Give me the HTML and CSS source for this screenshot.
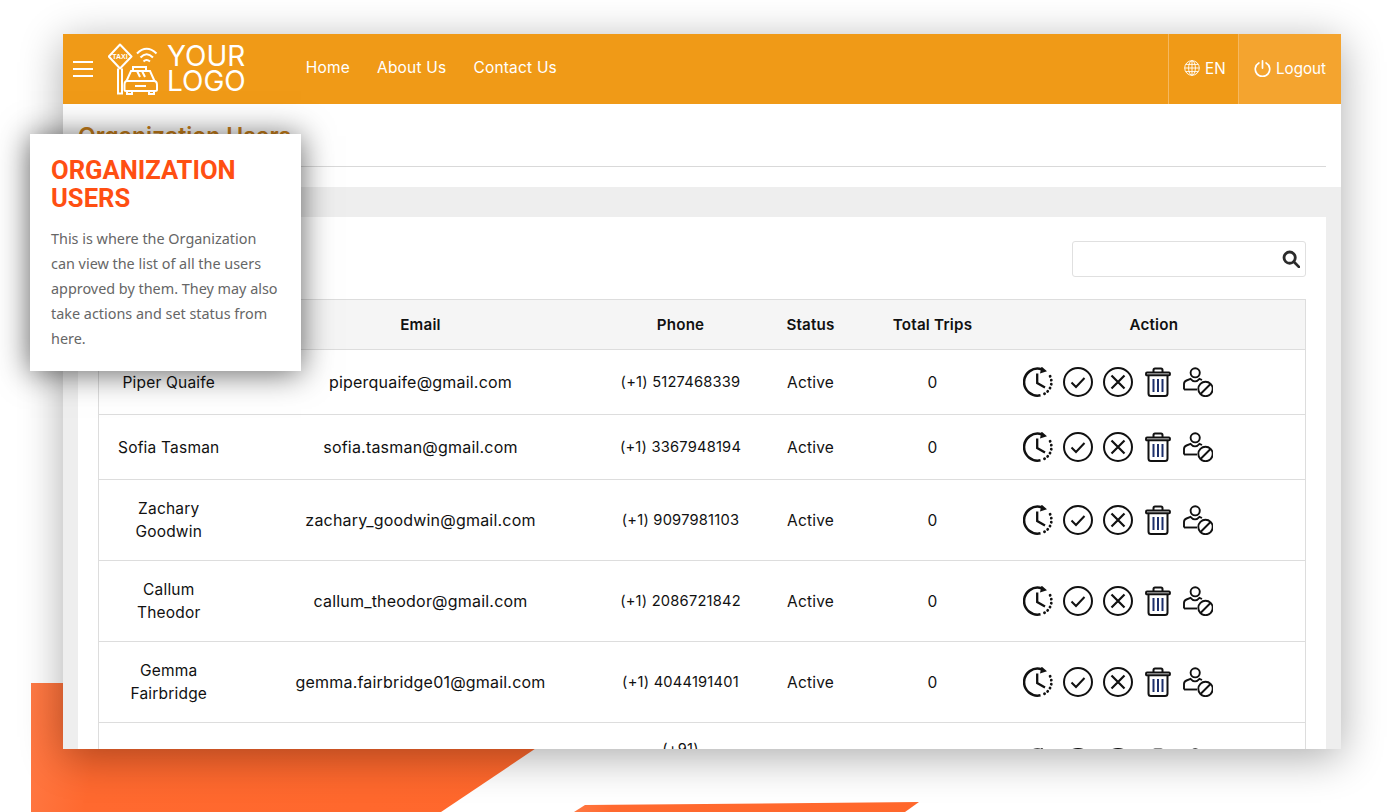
FILE: index.html
```html
<!DOCTYPE html>
<html lang="en">
<head>
    <meta charset="UTF-8">
    <title>Organization Users</title>
    <link rel="stylesheet" href="styles.css">
</head>
<body>
    <svg class="icon-defs" width="0" height="0">
        <symbol id="i-history" viewBox="0 0 30 30">
            <path d="M18.5 2.2A13.5 13.5 0 1 0 17.5 28.3" fill="none" stroke="#111" stroke-width="2.5"/>
            <path d="M21.5 26.8A13.5 13.5 0 0 0 25.8 7" fill="none" stroke="#111" stroke-width="2.8" stroke-dasharray="0.1 3.9" stroke-linecap="round"/>
            <path d="M18.5 -0.5L24 4.2L17 6.5Z" fill="#111"/>
            <path d="M14.2 6.5V16L22 20.5" fill="none" stroke="#111" stroke-width="2.3"/>
        </symbol>
        <symbol id="i-check" viewBox="0 0 30 30">
            <circle cx="15" cy="15" r="14" fill="none" stroke="#111" stroke-width="2"/>
            <path d="M8.5 15.5L13 20L21.5 11" fill="none" stroke="#111" stroke-width="2"/>
        </symbol>
        <symbol id="i-cross" viewBox="0 0 30 30">
            <circle cx="15" cy="15" r="14" fill="none" stroke="#111" stroke-width="2"/>
            <path d="M8.5 8.5L21.5 21.5M21.5 8.5L8.5 21.5" fill="none" stroke="#111" stroke-width="2.2"/>
        </symbol>
        <symbol id="i-trash" viewBox="0 0 30 30">
            <path d="M4 5.6Q3 5.6 3 7T4 8.2H26Q27 8.2 27 7T26 5.6ZM10.5 5.6V3Q10.5 1.4 12 1.4H18Q19.5 1.4 19.5 3V5.6" fill="none" stroke="#111" stroke-width="2"/>
            <path d="M5.5 8.2V26.5Q5.5 29 8 29H22Q24.5 29 24.5 26.5V8.2" fill="none" stroke="#111" stroke-width="2"/>
            <path d="M10.5 12V25M15 12V25M19.5 12V25" fill="none" stroke="#1c2f6b" stroke-width="2"/>
        </symbol>
        <symbol id="i-userban" viewBox="0 0 30 30">
            <circle cx="12.2" cy="5.8" r="4.6" fill="none" stroke="#111" stroke-width="1.9"/>
            <path d="M1 22.5V17Q1 14.5 3.5 13.5L7.5 11.8Q12 17 16.5 11.8L19 13" fill="none" stroke="#111" stroke-width="1.9"/>
            <path d="M1 22.5H14" fill="none" stroke="#111" stroke-width="1.9"/>
            <circle cx="22.5" cy="22" r="7.2" fill="#fff" stroke="#111" stroke-width="1.9"/>
            <path d="M17.5 27L27.5 17" fill="none" stroke="#111" stroke-width="1.9"/>
        </symbol>
    </svg>

    <div class="shape shape-big"></div>
    <div class="shape shape-small"></div>

    <div class="window">
        <header class="topbar">
            <div class="burger"><span></span><span></span><span></span></div>
            <a class="logo" href="#">
                <svg class="logo-mark" viewBox="0 0 50 52" width="50" height="52">
                    <g fill="none" stroke="#fff" stroke-width="2">
                        <path d="M12 1.5L23.5 13.5L12 25.5L0.8 13.5Z" stroke-linejoin="round"/>
                        <path d="M10 25.5V50.5H14V25.5"/>
                        <path d="M29 10.5Q38.5 1 48.5 10.5M32.5 14.5Q38.5 8 45 14.5M35.5 18.5Q38.5 15.5 42 18.5"/>
                        <path d="M18.5 38L23 28H42L46.5 38"/>
                        <path d="M25 28V24H38V28M29 28L32 34M34 28L37 34"/>
                        <path d="M19 38H46Q49 38 49 42V46.5Q49 48 47 48H18Q16.5 48 16.5 46.5V42Q16.5 38 19 38Z"/>
                        <path d="M19 48V51H24V48M41 48V51H46V48M27 43H38"/>
                    </g>
                    <text class="logo-taxi" x="12" y="16.3" text-anchor="middle">TAXI</text>
                </svg>
                <span class="logo-text">YOUR<br>LOGO</span>
            </a>
            <nav class="nav">
                <a href="#">Home</a>
                <a href="#">About Us</a>
                <a href="#">Contact Us</a>
            </nav>
            <div class="topbar-right">
                <a class="lang" href="#">
                    <svg viewBox="0 0 16 16" width="16" height="16" fill="none" stroke="#fff" stroke-width="0.9">
                        <circle cx="8" cy="8" r="7.3"/>
                        <ellipse cx="8" cy="8" rx="3.4" ry="7.3"/>
                        <path d="M8 .7V15.3M.7 8H15.3M1.8 4.4H14.2M1.8 11.6H14.2"/>
                    </svg>
                    EN
                </a>
                <a class="logout" href="#">
                    <svg viewBox="0 0 16 16" width="17" height="17" fill="none" stroke="#fff" stroke-width="1.6" stroke-linecap="round">
                        <path d="M4.6 2.8A6.8 6.8 0 1 0 11.4 2.8M8 .8V7.6"/>
                    </svg>
                    Logout
                </a>
            </div>
        </header>

        <div class="page-head">
            <h1>Organization Users</h1>
        </div>

        <main class="content">
            <section class="card">
                <div class="search-row">
                    <div class="search-box">
                        <input type="text">
                        <svg viewBox="0 0 16 16" width="18" height="18" fill="none" stroke="#2b2b2b" stroke-width="2.5">
                            <circle cx="6.8" cy="6.8" r="5"/>
                            <path d="M10.5 10.5L15 15" stroke-linecap="round"/>
                        </svg>
                    </div>
                </div>
                <table class="users">
                    <colgroup>
                        <col class="c-name"><col class="c-email"><col class="c-phone"><col class="c-status"><col class="c-trips"><col class="c-action">
                    </colgroup>
                    <thead>
                        <tr><th>Name</th><th>Email</th><th>Phone</th><th>Status</th><th>Total Trips</th><th>Action</th></tr>
                    </thead>
                    <tbody>
                        <tr class="short">
                            <td>Piper Quaife</td><td class="email">piperquaife@gmail.com</td><td class="phone">(+1) 5127468339</td><td>Active</td><td>0</td>
                            <td><div class="actions"><svg><use href="#i-history"/></svg><svg><use href="#i-check"/></svg><svg><use href="#i-cross"/></svg><svg><use href="#i-trash"/></svg><svg><use href="#i-userban"/></svg></div></td>
                        </tr>
                        <tr class="short">
                            <td>Sofia Tasman</td><td class="email">sofia.tasman@gmail.com</td><td class="phone">(+1) 3367948194</td><td>Active</td><td>0</td>
                            <td><div class="actions"><svg><use href="#i-history"/></svg><svg><use href="#i-check"/></svg><svg><use href="#i-cross"/></svg><svg><use href="#i-trash"/></svg><svg><use href="#i-userban"/></svg></div></td>
                        </tr>
                        <tr>
                            <td>Zachary<br>Goodwin</td><td class="email">zachary_goodwin@gmail.com</td><td class="phone">(+1) 9097981103</td><td>Active</td><td>0</td>
                            <td><div class="actions"><svg><use href="#i-history"/></svg><svg><use href="#i-check"/></svg><svg><use href="#i-cross"/></svg><svg><use href="#i-trash"/></svg><svg><use href="#i-userban"/></svg></div></td>
                        </tr>
                        <tr>
                            <td>Callum<br>Theodor</td><td class="email">callum_theodor@gmail.com</td><td class="phone">(+1) 2086721842</td><td>Active</td><td>0</td>
                            <td><div class="actions"><svg><use href="#i-history"/></svg><svg><use href="#i-check"/></svg><svg><use href="#i-cross"/></svg><svg><use href="#i-trash"/></svg><svg><use href="#i-userban"/></svg></div></td>
                        </tr>
                        <tr>
                            <td>Gemma<br>Fairbridge</td><td class="email">gemma.fairbridge01@gmail.com</td><td class="phone">(+1) 4044191401</td><td>Active</td><td>0</td>
                            <td><div class="actions"><svg><use href="#i-history"/></svg><svg><use href="#i-check"/></svg><svg><use href="#i-cross"/></svg><svg><use href="#i-trash"/></svg><svg><use href="#i-userban"/></svg></div></td>
                        </tr>
                        <tr>
                            <td></td><td></td><td class="phone last-phone">(+91)<br>&nbsp;</td><td></td><td></td>
                            <td><div class="actions"><svg><use href="#i-history"/></svg><svg><use href="#i-check"/></svg><svg><use href="#i-cross"/></svg><svg><use href="#i-trash"/></svg><svg><use href="#i-userban"/></svg></div></td>
                        </tr>
                    </tbody>
                </table>
            </section>
        </main>
    </div>

    <aside class="callout">
        <h2>ORGANIZATION USERS</h2>
        <p>This is where the Organization can view the list of all the users approved by them. They may also take actions and set status from here.</p>
    </aside>
</body>
</html>
```

FILE: styles.css
```css
html, body {
    margin: 0;
    height: 100%;
}
body {
    position: relative;
    width: 1389px;
    height: 812px;
    overflow: hidden;
    background: #fff;
    font-family: Inter, "Liberation Sans", sans-serif;
    color: #111;
}
a {
    color: inherit;
    text-decoration: none;
}
.icon-defs {
    position: absolute;
}

/* backdrop shapes */
.shape {
    position: absolute;
    background: linear-gradient(100deg, #ff7a45 0, #ff692f 12%, #ff672b 100%);
}
.shape-big {
    left: 31px;
    top: 683px;
    width: 610px;
    height: 129px;
    clip-path: polygon(0 0, 602px 0, 410px 129px, 0 129px);
}
.shape-small {
    left: 570px;
    top: 802px;
    width: 350px;
    height: 10px;
    clip-path: polygon(15px 3px, 349px 0, 335px 10px, 4px 10px);
}

/* app window */
.window {
    position: absolute;
    left: 63px;
    top: 34px;
    width: 1278px;
    height: 715px;
    overflow: hidden;
    background: #fff;
    box-shadow: 0 8px 40px rgba(0, 0, 0, .33);
}
.topbar {
    display: flex;
    align-items: center;
    height: 70px;
    background: #f09a17;
    color: #fff;
}
.burger {
    display: flex;
    flex-direction: column;
    gap: 5px;
    width: 20px;
    margin-left: 10px;
}
.burger span {
    height: 2px;
    background: #fff;
}
.logo {
    display: flex;
    align-items: center;
    gap: 9px;
    margin-left: 15px;
}
.logo-taxi {
    font-family: "Liberation Sans", sans-serif;
    font-size: 7px;
    font-weight: 700;
    fill: #fff;
}
.logo-text {
    font-size: 28px;
    line-height: 25px;
    font-weight: 400;
}
.nav {
    display: flex;
    gap: 27px;
    margin-left: 60px;
    padding-bottom: 3px;
    font-size: 15.5px;
    letter-spacing: .2px;
}
.topbar-right {
    display: flex;
    align-self: stretch;
    margin-left: auto;
    font-size: 15.2px;
}
.lang, .logout {
    display: flex;
    align-items: center;
    gap: 5px;
    padding-left: 15px;
    padding-bottom: 2px;
    box-sizing: border-box;
    border-left: 1px solid #f5b860;
}
.lang {
    width: 70px;
}
.logout {
    width: 103px;
    background: #f4a42f;
}
.page-head {
    height: 62px;
    margin: 0 15px;
    border-bottom: 1px solid #d9d9d9;
}
.page-head h1 {
    margin: 0;
    padding-top: 20px;
    font-size: 23px;
    line-height: 24px;
    font-weight: 600;
    color: #c9801a;
}

/* list */
.content {
    height: 562px;
    margin-top: 20px;
    padding: 30px 15px 0;
    background: #eee;
    box-sizing: border-box;
}
.card {
    height: 600px;
    padding: 24px 20px 0;
    background: #fff;
}
.search-row {
    display: flex;
    justify-content: flex-end;
    margin-bottom: 22px;
}
.search-box {
    display: flex;
    align-items: center;
    width: 234px;
    height: 36px;
    padding-right: 5px;
    box-sizing: border-box;
    border: 1px solid #e0e0e0;
    border-radius: 3px;
}
.search-box input {
    flex: 1;
    min-width: 0;
    border: 0;
    outline: 0;
}
.users {
    width: 1207px;
    table-layout: fixed;
    border-collapse: collapse;
    font-size: 15.5px;
    line-height: 23px;
    letter-spacing: .2px;
    text-align: center;
}
.c-name { width: 140px; }
.c-email { width: 364px; }
.c-phone { width: 156px; }
.c-status { width: 104px; }
.c-trips { width: 140px; }
.c-action { width: 303px; }
.users th {
    height: 49px;
    padding: 0;
    border-top: 1px solid #ddd;
    border-bottom: 1px solid #ddd;
    background: #f5f5f5;
    font-size: 15.2px;
    font-weight: 600;
}
.users th:first-child, .users td:first-child {
    border-left: 1px solid #ddd;
}
.users th:last-child, .users td:last-child {
    border-right: 1px solid #ddd;
}
.users td {
    height: 80px;
    padding: 0;
    border-bottom: 1px solid #ddd;
}
.users .short td {
    height: 64px;
}
.users .email {
    font-size: 16px;
}
.users .phone {
    font-size: 14.7px;
}
.users .last-phone {
    height: 76px;
    padding-bottom: 4px;
}
.actions {
    display: flex;
    gap: 10px;
    padding-left: 20px;
}
.actions svg {
    width: 30px;
    height: 30px;
}

/* tour callout */
.callout {
    position: absolute;
    left: 30px;
    top: 134px;
    width: 271px;
    height: 237px;
    padding: 22px 21px 0;
    box-sizing: border-box;
    background: #fff;
    box-shadow: 0 2px 30px rgba(0, 0, 0, .62);
}
.callout h2 {
    margin: 0;
    font-family: Roboto, sans-serif;
    font-size: 25.6px;
    line-height: 28px;
    font-weight: 700;
    color: #ff4f12;
}
.callout p {
    margin: 14px 0 0;
    font-family: "Noto Sans", sans-serif;
    font-size: 14.4px;
    line-height: 25px;
    color: #666;
}
```
